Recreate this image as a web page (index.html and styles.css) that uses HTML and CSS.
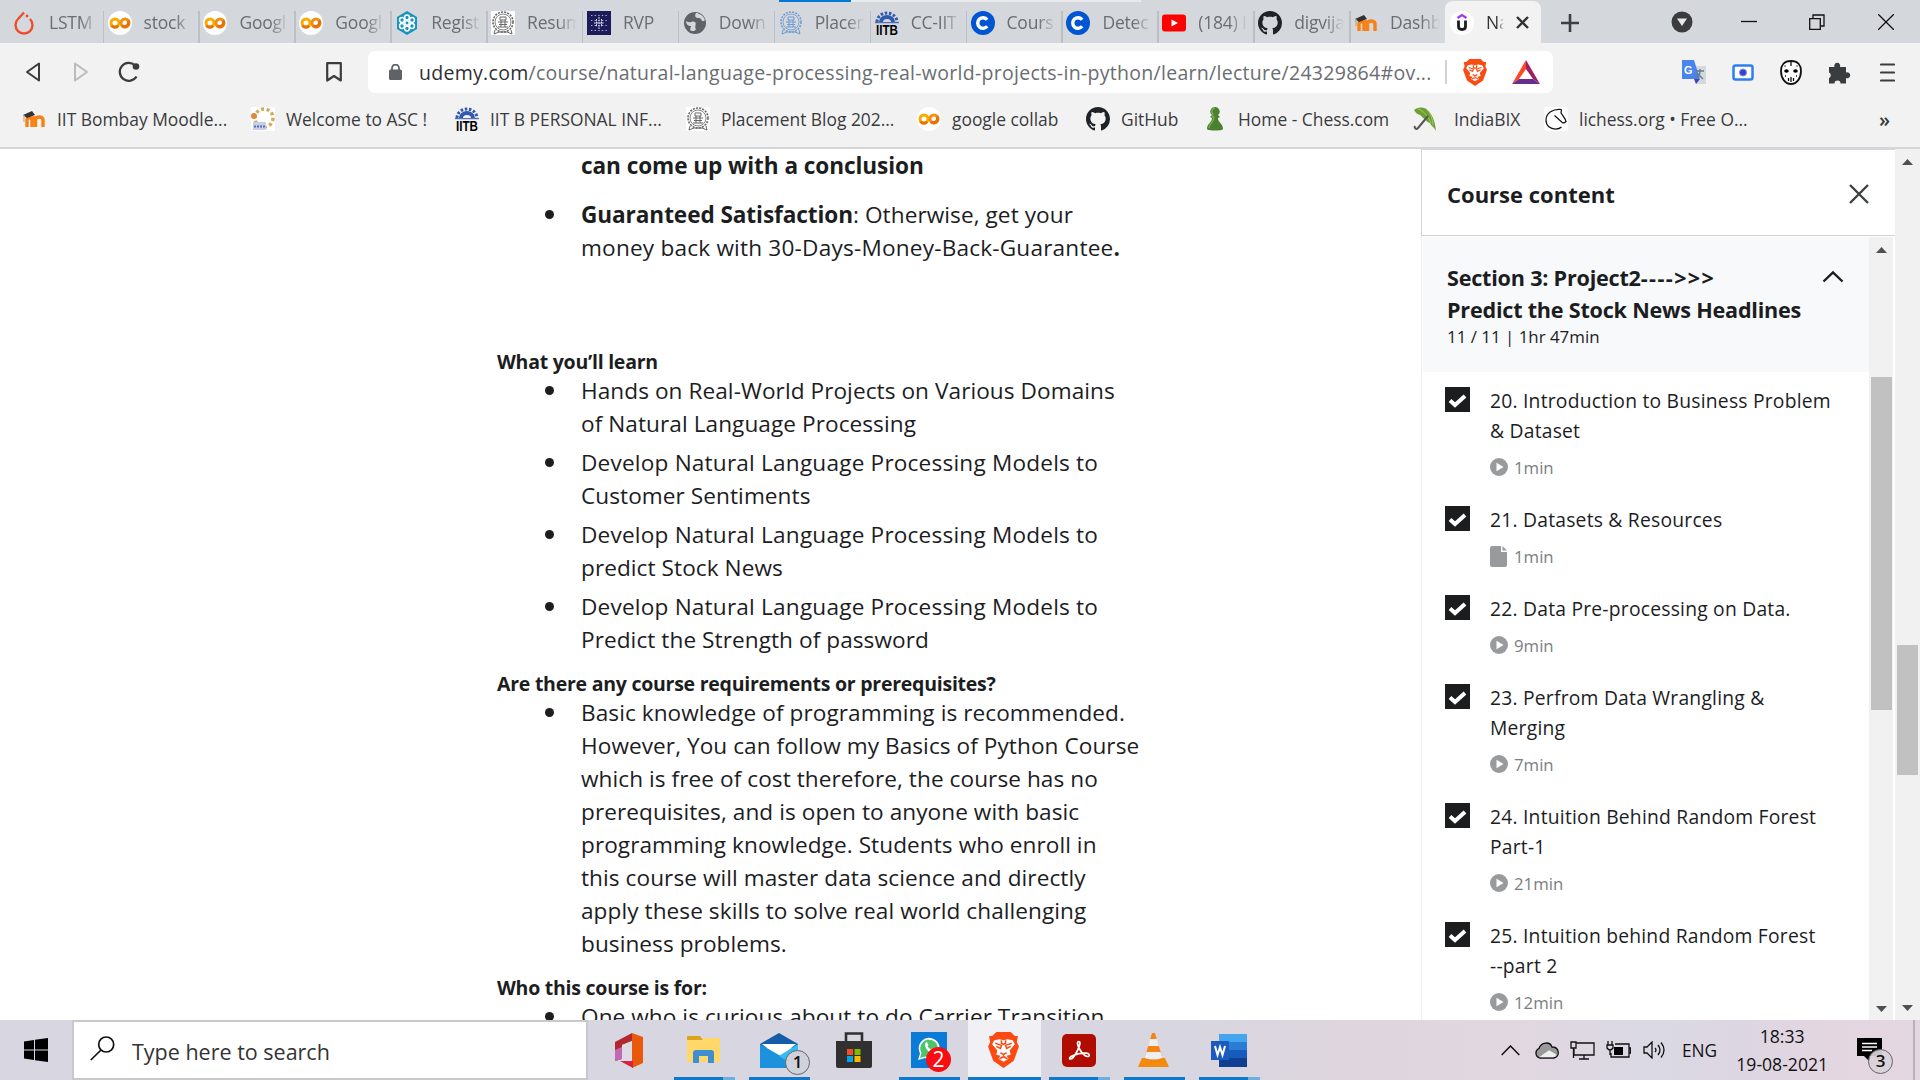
FILE: index.html
```html
<!DOCTYPE html>
<html lang="en">
<head>
<meta charset="utf-8">
<title>Natural Language Processing</title>
<link rel="stylesheet" href="styles.css">
</head>
<body>
<svg class="defs" width="0" height="0">
  <symbol id="colab" viewBox="0 0 24 24"><circle cx="12" cy="12" r="12" fill="#fff"/><circle cx="7" cy="12" r="4" fill="none" stroke="#f9ab00" stroke-width="3"/><circle cx="17" cy="12" r="4" fill="none" stroke="#f29111" stroke-width="3"/><path d="M3.500 14.500A4 4 0 0 0 10 14.600M20 9.500A4 4 0 0 1 14 14.600" fill="none" stroke="#e8710a" stroke-width="3"/></symbol>
  <symbol id="flame" viewBox="0 0 24 24"><path d="M12 1.500 6 8a8.500 8.500 0 1 0 12 0" fill="none" stroke="#ee4c2c" stroke-width="2.400"/><circle cx="15" cy="5" r="1.400" fill="#ee4c2c"/></symbol>
  <symbol id="flower" viewBox="0 0 24 24"><path d="M12 0 22 6V18L12 24 2 18V6Z" fill="#1693bf"/><g fill="none" stroke="#fff" stroke-width="1.500"><circle cx="12" cy="12" r="2.200"/><circle cx="12" cy="6.500" r="2.400"/><circle cx="12" cy="17.500" r="2.400"/><circle cx="7" cy="9" r="2.400"/><circle cx="17" cy="9" r="2.400"/><circle cx="7" cy="15" r="2.400"/><circle cx="17" cy="15" r="2.400"/></g></symbol>
  <symbol id="seal" viewBox="0 0 24 24"><circle cx="12" cy="11" r="10" fill="none" stroke="currentColor" stroke-width="1.600" stroke-dasharray="2 1.200"/><circle cx="12" cy="11" r="8" fill="none" stroke="currentColor" stroke-width=".8"/><path d="M9 6h6v3H9zM7 11h10M8 13.500h8M10 9v7M14 9v7M7 16h10M4 19l-1 4 5-2h8l5 2-1-4" fill="none" stroke="currentColor" stroke-width="1"/></symbol>
  <symbol id="rvp" viewBox="0 0 24 24"><path fill="#1e1c58" d="M0 0h24v24H0z"/><path d="M4 4.500h16M4 9.500h16M4 14.500h16M4 19.500h16" stroke="#a9a9dc" stroke-width="1.200" stroke-dasharray="1.400 2.200"/><path d="M9.500 8v8M12 6v12M14.500 8v8M7 12h10" stroke="#e6e6fa" stroke-width="1" stroke-dasharray="1.800 .8"/></symbol>
  <symbol id="globe" viewBox="0 0 24 24"><circle cx="12" cy="12" r="11" fill="#5f6368"/><path d="M3 10c4 3 6-1 9 1 2 2-1 5 1 7-1 3-5 2-6 1l1-4c-3 0-5-2-5-5ZM13 2c-2 4 0 5 3 5s2 4 5 3l1-1C20 4 16 2 13 2Z" fill="#d4d8dc"/></symbol>
  <symbol id="iitb" viewBox="0 0 24 24"><path d="M2 11a10 9 0 0 1 20 0" fill="none" stroke="#3159ad" stroke-width="3" stroke-dasharray="2.500 1.700"/><path d="M4 11a8 7 0 0 1 16 0h-4a4 3 0 0 0-8 0Z" fill="#3159ad"/><path d="M0 11.700h24" stroke="#3159ad"/><text x="1" y="24" textLength="22" lengthAdjust="spacingAndGlyphs" class="iitb-text">IITB</text></symbol>
  <symbol id="coursera" viewBox="0 0 24 24"><circle cx="12" cy="12" r="12" fill="#0056d2"/><path d="M16.200 8.700a5.300 5.300 0 1 0 0 6.600" fill="none" stroke="#fff" stroke-width="3.400"/></symbol>
  <symbol id="youtube" viewBox="0 0 24 24"><rect y="3.500" width="24" height="17" rx="3" fill="#f00"/><path d="m9.500 8.500 6.500 3.500-6.500 3.500Z" fill="#fff"/></symbol>
  <symbol id="github" viewBox="0 0 16 16"><path fill="#1f2328" d="M8 0C3.580 0 0 3.580 0 8c0 3.540 2.290 6.530 5.470 7.590.4.070.55-.17.55-.38 0-.19-.01-.82-.01-1.490-2.010.37-2.530-.49-2.690-.94-.09-.23-.48-.94-.82-1.130-.28-.15-.68-.52-.01-.53.63-.01 1.080.58 1.230.82.72 1.210 1.870.87 2.330.66.070-.52.280-.87.510-1.070-1.780-.2-3.640-.89-3.640-3.950 0-.87.310-1.590.820-2.150-.08-.2-.36-1.020.080-2.120 0 0 .67-.21 2.200.82.64-.18 1.320-.27 2-.27s1.360.09 2 .27c1.530-1.040 2.200-.82 2.200-.82.44 1.100.16 1.920.080 2.120.51.56.82 1.270.82 2.150 0 3.070-1.870 3.750-3.650 3.950.29.25.54.73.54 1.480 0 1.070-.01 1.930-.01 2.200 0 .21.150.46.550.38A8.010 8.010 0 0 0 16 8c0-4.420-3.580-8-8-8Z"/></symbol>
  <symbol id="moodle" viewBox="0 0 24 24"><path d="M5 20v-7c0-3 5-3 5 0v7m3.500 0v-7c0-4 7.500-4 7.500 0v7M10 13c0-3 3.500-3 3.500 0v7" fill="none" stroke="#f98012" stroke-width="3.400"/><path d="m1 8 9-4 3 4-8 3Z" fill="#333"/><path d="M2 8v7" stroke="#c79a62"/></symbol>
  <symbol id="udemy" viewBox="0 0 24 24"><circle cx="12" cy="12" r="12" fill="#fff"/><path d="m7.500 7 4.500-3 4.500 3" fill="none" stroke="#a435f0" stroke-width="2.200"/><path d="M8.500 9.500v6c0 4 7 4 7 0v-6" fill="none" stroke="#1c1d1f" stroke-width="2.800"/></symbol>
  <symbol id="asc" viewBox="0 0 24 24"><path fill="#fff" d="M0 0h24v24H0z"/><circle cx="13" cy="11" r="9" fill="none" stroke="#d1a95c" stroke-width="3.400" stroke-dasharray="3 2.600"/><circle cx="3" cy="9" r="3" fill="#d78a3c"/><path d="M2 15h13v8H2z" fill="#c8cfe6"/><path d="M3 19.500h11" stroke="#5571b3" stroke-width="2" stroke-dasharray="2 1"/></symbol>
  <symbol id="pawn" viewBox="0 0 24 24"><path d="M12 0a4.500 4.500 0 0 1 3 8l2 2-2 1c0 5 5 5 5 11 0 2-16 2-16 0 0-6 5-6 5-11l-2-1 2-2a4.500 4.500 0 0 1 3-8Z" fill="#4c8134"/><path d="M12 1a3.500 3.500 0 0 0-2 6l-1 3h2c0 6-5 6-5 11" fill="none" stroke="#77a94d" stroke-width="1.400"/></symbol>
  <symbol id="umbrella" viewBox="0 0 24 24"><path d="M1 3C8-3 21 1 23 24c-3-5-5-5-6-8-4-1-4-4-7-5C7 6 4 9 1 3Z" fill="#6da033"/><path d="M5 2c6 2 10 7 13 14M12 1c5 4 7 8 8 17" fill="none" stroke="#a3c969"/><path d="M15 9 5 21c-2 2-4 0-3-2" fill="none" stroke="#555" stroke-width="2"/></symbol>
  <symbol id="lichess" viewBox="0 0 24 24"><rect width="24" height="24" rx="3" fill="#fff"/><path d="M17.500 2.500C9 1.500 2 6 2 13c0 6 4.500 9 9.500 9 2.500 0 4.500-.5 6-2M17.500 2.500 17 6c2 3 4.500 5.500 5 8.500-1 1.200-2.200 1.700-3.500 1.300L10.500 8.500" fill="none" stroke="#111" stroke-width="1.250"/></symbol>
  <symbol id="brave" viewBox="0 0 30 35"><path d="M8 0h14l4 4 3 0-1 6 2 4-5 14-10 7-10-7L0 14l2-4L1 4h3Z" fill="#fb4a12"/><path d="m6 8 5-1 4 1 4-1 5 1 2 4-5 6 1 4-4 1 2 3-5 3-5-3 2-3-4-1 1-4-5-6Z" fill="#fff"/><path d="m7 11 6 2-1 3-4-2M23 11l-6 2 1 3 4-2M13 8v3l2 1 2-1V8M12 20l3 2 3-2M15 22v3M11 26l4-2 4 2" fill="none" stroke="#fb4a12" stroke-width="1.500"/></symbol>
  <symbol id="check" viewBox="0 0 25 25"><path fill="#1c1d1f" d="M0 0h25v25H0z"/><path d="m5 13.500 5 4.500L20 9" fill="none" stroke="#fff" stroke-width="4"/></symbol>
  <symbol id="play" viewBox="0 0 18 18"><circle cx="9" cy="9" r="9" fill="#989a9c"/><path d="m6.500 4.800 7 4.200-7 4.200Z" fill="#fff"/></symbol>
  <symbol id="file" viewBox="0 0 18 21"><path d="M2 0h9v6h6v13a2 2 0 0 1-2 2H2a2 2 0 0 1-2-2V2a2 2 0 0 1 2-2Z" fill="#989a9c"/><path d="m12.500 0 4.500 4.500h-4.500Z" fill="#989a9c"/></symbol>
  <symbol id="up" viewBox="0 0 11 6"><path d="M0 6 5.500 0 11 6Z" fill="#505050"/></symbol>
  <symbol id="down" viewBox="0 0 11 6"><path d="M0 0h11L5.500 6Z" fill="#505050"/></symbol>
</svg>

<header class="browser">
  <div class="tabstrip">
    <div class="tab first"><svg><use href="#flame"/></svg><span>LSTM</span></div>
    <div class="tab"><svg><use href="#colab"/></svg><span>stock</span></div>
    <div class="tab"><svg><use href="#colab"/></svg><span>Googl</span></div>
    <div class="tab"><svg><use href="#colab"/></svg><span>Googl</span></div>
    <div class="tab"><svg><use href="#flower"/></svg><span>Regist</span></div>
    <div class="tab"><svg class="seal"><use href="#seal"/></svg><span>Resum</span></div>
    <div class="tab"><svg><use href="#rvp"/></svg><span>RVP</span></div>
    <div class="tab"><svg><use href="#globe"/></svg><span>Down</span></div>
    <div class="tab"><svg class="seal-blue"><use href="#seal"/></svg><span>Placem</span></div>
    <div class="tab"><svg><use href="#iitb"/></svg><span>CC-IIT</span></div>
    <div class="tab"><svg><use href="#coursera"/></svg><span>Cours</span></div>
    <div class="tab"><svg><use href="#coursera"/></svg><span>Detec</span></div>
    <div class="tab"><svg><use href="#youtube"/></svg><span>(184) I</span></div>
    <div class="tab"><svg><use href="#github"/></svg><span>digvija</span></div>
    <div class="tab"><svg><use href="#moodle"/></svg><span>Dashb</span></div>
    <div class="tab active"><svg><use href="#udemy"/></svg><span>Na</span><svg class="tab-close" viewBox="0 0 13 13"><path d="m1 1 11 11M12 1 1 12" stroke="#333" stroke-width="2.400"/></svg></div>
    <svg class="plus" viewBox="0 0 18 18"><path d="M9 0v18M0 9h18" stroke="#3c4043" stroke-width="2.600"/></svg>
    <div class="window-buttons">
      <svg width="22" height="22" viewBox="0 0 22 22"><circle cx="11" cy="11" r="10.500" fill="#3b3c3e"/><path d="M6 7.500h10L11 15Z" fill="#e8eaec"/></svg>
      <svg width="16" height="16" viewBox="0 0 16 16"><path d="M0 7.500h16" stroke="#111" stroke-width="1.300"/></svg>
      <svg width="16" height="16" viewBox="0 0 16 16"><path d="M.7 4.700h10.600v10.600H.7zM4 4V1h11v11h-3" fill="none" stroke="#111" stroke-width="1.300"/></svg>
      <svg width="16" height="16" viewBox="0 0 16 16"><path d="m0 0 16 16M16 0 0 16" stroke="#111" stroke-width="1.300"/></svg>
    </div>
  </div>
  <div class="progress"><i></i></div>

  <div class="toolbar">
    <div class="nav">
      <svg width="16" height="20" viewBox="0 0 16 20"><path d="M14 1.500v17L2 10Z" fill="none" stroke="#3b3c3e" stroke-width="2" stroke-linejoin="round"/></svg>
      <svg width="16" height="20" viewBox="0 0 16 20"><path d="M2 1.500v17L14 10Z" fill="none" stroke="#bbb" stroke-width="2" stroke-linejoin="round"/></svg>
      <svg width="22" height="22" viewBox="0 0 22 22"><path d="M18.500 15.500A9 9 0 1 1 17 4.300" fill="none" stroke="#3b3c3e" stroke-width="2.300"/><circle cx="18" cy="5.500" r="3.300" fill="#3b3c3e"/></svg>
      <svg class="bookmark" width="16" height="20" viewBox="0 0 16 20"><path d="M1.200 1.200h13.600v17.300L8 14l-6.800 4.500Z" fill="none" stroke="#3b3c3e" stroke-width="2.200" stroke-linejoin="round"/></svg>
    </div>
    <div class="address">
      <svg width="13" height="16" viewBox="0 0 13 16"><rect y="5.500" width="13" height="10.500" rx="1.500" fill="#5f6368"/><path d="M3 6V4a3.500 3.500 0 0 1 7 0v2" fill="none" stroke="#5f6368" stroke-width="1.800"/></svg>
      <span class="url"><b>udemy.com</b>/course/natural-language-processing-real-world-projects-in-python/learn/lecture/24329864#ov...</span>
      <i></i>
      <svg width="24" height="27" viewBox="0 0 30 35" preserveAspectRatio="none"><use href="#brave" width="30" height="35"/></svg>
      <svg width="28" height="24" viewBox="0 0 28 24"><path d="M14 0v9L7 19 0 24Z" fill="#ff4724"/><path d="M14 0v9l7 10 7 5Z" fill="#9e1f63"/><path d="m0 24 7-5h14l7 5Z" fill="#662d91"/></svg>
    </div>
    <div class="extensions">
      <svg width="24" height="24" viewBox="0 0 24 24"><path d="M10 6h14v18H14Z" fill="#d5d8dc"/><path d="M0 0h12l6 19H0Z" fill="#4a84ec"/><path d="M12 19h6l-4 5Z" fill="#3948b3"/><text x="2" y="14" class="gt">G</text><path d="M14 11h8m-4-2v2c0 3-2 6-5 7m2-5 6 6" fill="none" stroke="#607d8b" stroke-width="1.400"/></svg>
      <svg width="22" height="17" viewBox="0 0 22 17"><rect x="1.500" y="1.500" width="19" height="14" rx="2" fill="#fff" stroke="#2d7ff0" stroke-width="2.500"/><circle cx="11" cy="8.500" r="3.500" fill="#3f40c8" stroke="#6f8df0"/></svg>
      <svg width="22" height="25" viewBox="0 0 22 25"><path d="M11 1c7 0 10 4 10 10 0 7-4 13-10 13S1 18 1 11C1 5 4 1 11 1Z" fill="#fff" stroke="#111" stroke-width="1.800"/><ellipse cx="6.500" cy="11" rx="2.300" ry="1.700" /><ellipse cx="15.500" cy="11" rx="2.300" ry="1.700"/><path d="M11 2v4M4.500 6h1m12 0h-1M5 16h1m10 0h1M8.500 18v3M11 17v5M13.500 18v3" stroke="#111" stroke-width="1.300"/></svg>
      <svg width="23" height="23" viewBox="0 0 23 23"><path d="M1 6h5.500a3 3 0 1 1 5.500 0H18v5.500a3 3 0 1 1 0 5.500v5.500h-5.500a3 3 0 0 0-6 0H1V17a3 3 0 0 0 0-5.500Z" fill="#3b3c3e"/></svg>
      <svg width="15" height="19" viewBox="0 0 15 19"><path d="M1 1.500h13M1 9.500h13M1 17.500h13" stroke="#3b3c3e" stroke-width="2.200" stroke-linecap="round"/></svg>
    </div>
  </div>

  <div class="bookmarks">
    <div><svg><use href="#moodle"/></svg><span>IIT Bombay Moodle...</span></div>
    <div><svg><use href="#asc"/></svg><span>Welcome to ASC !</span></div>
    <div><svg><use href="#iitb"/></svg><span>IIT B PERSONAL INF...</span></div>
    <div><svg class="seal"><use href="#seal"/></svg><span>Placement Blog 202...</span></div>
    <div><svg><use href="#colab"/></svg><span>google collab</span></div>
    <div><svg><use href="#github"/></svg><span>GitHub</span></div>
    <div><svg><use href="#pawn"/></svg><span>Home - Chess.com</span></div>
    <div><svg><use href="#umbrella"/></svg><span>IndiaBIX</span></div>
    <div><svg><use href="#lichess"/></svg><span>lichess.org • Free O...</span></div>
    <div><b>»</b></div>
  </div>
</header>

<div class="page">
  <main class="description">
    <ul>
      <li class="continued"><strong>can come up with a conclusion</strong></li>
      <li><strong>Guaranteed Satisfaction</strong>: Otherwise, get your<br><span class="wide">money back with 30-Days-Money-Back-Guarantee<strong>.</strong></span></li>
    </ul>
    <h2 class="spaced">What you’ll learn</h2>
    <ul>
      <li>Hands on Real-World Projects on Various Domains<br>of Natural Language Processing</li>
      <li><span class="wide">Develop Natural Language Processing Models to</span><br>Customer Sentiments</li>
      <li><span class="wide">Develop Natural Language Processing Models to</span><br>predict Stock News</li>
      <li><span class="wide">Develop Natural Language Processing Models to</span><br>Predict the Strength of password</li>
    </ul>
    <h2>Are there any course requirements or prerequisites?</h2>
    <ul>
      <li>Basic knowledge of programming is recommended.<br>However, You can follow my Basics of Python Course<br>which is free of cost therefore, the course has no<br>prerequisites, and is open to anyone with basic<br>programming knowledge. Students who enroll in<br>this course will master data science and directly<br>apply these skills to solve real world challenging<br>business problems.</li>
    </ul>
    <h2>Who this course is for:</h2>
    <ul>
      <li>One who is curious about to do Carrier Transition</li>
    </ul>
  </main>

  <aside class="sidebar">
    <div class="sidebar-head">
      <h3>Course content</h3>
      <svg width="20" height="20" viewBox="0 0 20 20"><path d="m1 1 18 18M19 1 1 19" stroke="#3e4143" stroke-width="2.400"/></svg>
    </div>
    <div class="sidebar-body">
      <div class="curriculum">
        <div class="section">
          <div>
            <h3>Section 3: Project2<span class="arrows">----&gt;&gt;&gt;</span><br>Predict the Stock News Headlines</h3>
            <p>11 / 11 | 1hr 47min</p>
          </div>
          <svg width="22" height="13" viewBox="0 0 22 13"><path d="m1.500 11.500 9.500-9 9.500 9" fill="none" stroke="#1c1d1f" stroke-width="2.400"/></svg>
        </div>
        <div class="lecture"><svg class="box"><use href="#check"/></svg><div><p>20. Introduction to Business Problem<br>&amp; Dataset</p><small><svg><use href="#play"/></svg>1min</small></div></div>
        <div class="lecture"><svg class="box"><use href="#check"/></svg><div><p>21. Datasets &amp; Resources</p><small><svg class="file"><use href="#file"/></svg>1min</small></div></div>
        <div class="lecture"><svg class="box"><use href="#check"/></svg><div><p>22. Data Pre-processing on Data.</p><small><svg><use href="#play"/></svg>9min</small></div></div>
        <div class="lecture"><svg class="box"><use href="#check"/></svg><div><p>23. Perfrom Data Wrangling &amp;<br>Merging</p><small><svg><use href="#play"/></svg>7min</small></div></div>
        <div class="lecture"><svg class="box"><use href="#check"/></svg><div><p>24. Intuition Behind Random Forest<br>Part-1</p><small><svg><use href="#play"/></svg>21min</small></div></div>
        <div class="lecture"><svg class="box"><use href="#check"/></svg><div><p>25. Intuition behind Random Forest<br>--part 2</p><small><svg><use href="#play"/></svg>12min</small></div></div>
      </div>
      <div class="scroll inner"><svg><use href="#up"/></svg><i></i><svg><use href="#down"/></svg></div>
    </div>
  </aside>
  <div class="scroll outer"><svg><use href="#up"/></svg><i></i><svg><use href="#down"/></svg></div>
</div>

<footer class="taskbar">
  <div class="start"><svg width="24" height="24" viewBox="0 0 24 24"><path d="M0 3.500 10 2v9.500H0zM11 1.800 24 0v11.500H11zM0 12.500h10V22L0 20.500zM11 12.500h13V24l-13-1.800z"/></svg></div>
  <div class="search"><svg width="25" height="25" viewBox="0 0 25 25"><circle cx="16.200" cy="8.500" r="7.500" fill="none" stroke="#111" stroke-width="1.700"/><path d="M11 14 .8 24" stroke="#111" stroke-width="1.700"/></svg><span>Type here to search</span></div>
  <div class="apps">
    <div class="app"><svg width="28" height="35" viewBox="0 0 28 35"><path d="M17 0 28 4v26l-11 5V7Z" fill="#e8590c"/><path d="M17 0v8L7 12v14L0 28V9Z" fill="#b3272d"/><path d="M0 17 7 14v12L0 28Z" fill="#c16ab4"/><path d="M5 28h13v7Z" fill="#dc2043"/><path d="M7 12 17 8v20H7l-2 0 2-2Z" fill="#dddbe4"/></svg></div>
    <div class="app open multi"><svg width="34" height="28" viewBox="0 0 34 28"><path d="M0 1q0-1 1-1h12l3 4H0Z" fill="#dca31b"/><path d="M0 4h15l2-2h16v24H0Z" fill="#ffd869"/><path d="M6 27V17q0-3 3-3h15q3 0 3 3v10h-6v-7h-9v7Z" fill="#3d8fd1"/></svg></div>
    <div class="app open"><svg width="38" height="35" viewBox="0 0 38 35"><path d="M0 11 19 0l19 11v4H0Z" fill="#145da9"/><path d="M2 11h34L19 25Z" fill="#fff"/><path d="M0 11 38 33v2H0Z" fill="#1c91dd"/><path d="M38 11 19 23l19 12Z" fill="#35bdf2"/></svg><b class="badge">1</b></div>
    <div class="app"><svg width="36" height="36" viewBox="0 0 36 36"><path d="M10 10V1.500h16V10" fill="none" stroke="#303030" stroke-width="2.600"/><path d="M0 9h36v25q0 2-2 2H2q-2 0-2-2Z" fill="#303030"/><path d="M11 17h6v6h-6z" fill="#f25022"/><path d="M18.500 17h6v6h-6z" fill="#7fba00"/><path d="M11 24h6v6h-6z" fill="#00a4ef"/><path d="M18.500 24h6v6h-6z" fill="#ffb900"/></svg></div>
    <div class="app open"><svg width="36" height="36" viewBox="0 0 36 36"><path fill="#0a7bd6" d="M0 0h36v36H0z"/><path d="m7 28 2-6.500A10.500 10.500 0 1 1 14 26Z" fill="#fff"/><path d="m9 26 1.500-5a8.800 8.800 0 1 1 4 3.500Z" fill="#4fc36a"/><path d="M14 12c0 5 4 9 9 9l1.500-2.500-3.500-2-1.500 1-3-3 1-1.500-2-3.500Z" fill="#fff"/></svg><b class="badge red">2</b></div>
    <div class="app open active"><svg width="31" height="36"><use href="#brave"/></svg></div>
    <div class="app open multi"><svg width="34" height="33" viewBox="0 0 34 33"><rect width="34" height="33" rx="5" fill="#b10c00"/><path d="M17 7.500c-2.500 0-1.500 4 .5 7.500s5 7 8 7.500c2.500 0 2.500-3-1.500-3.300-4-.3-9 .8-13 2.300-4 1.500-4 3.500-2.500 3.500 2 0 5-4.500 7-8.500S19 7.500 17 7.500Z" fill="none" stroke="#fff" stroke-width="1.700"/></svg></div>
    <div class="app open"><svg width="31" height="34" viewBox="0 0 31 34"><path d="M4 25h23l4 9H0Z" fill="#f58b0a"/><path d="M14 0h3l8 27q-9 5-19 0Z" fill="#f48417"/><path d="m12 6-2 7h11l-2-7ZM8.500 19l-2 6q9 3 18 0l-2-6Z" fill="#eee"/></svg></div>
    <div class="app open multi"><svg width="36" height="33" viewBox="0 0 36 33"><path d="M8 0h28v9H8z" fill="#42a5ee"/><path d="M8 8h28v8H8z" fill="#2b7cd3"/><path d="M8 16h28v8H8z" fill="#185abd"/><path d="M8 24h28v9H8z" fill="#103f91"/><path d="M0 7h18v19H0z" fill="#1b5bbd"/><path d="m4 12 2.500 9L9 13l2.500 8 2.500-9" fill="none" stroke="#fff" stroke-width="2"/></svg></div>
  </div>
  <div class="tray">
    <svg width="19" height="11" viewBox="0 0 19 11"><path d="m.7 10 8.800-9 8.800 9" fill="none" stroke="#111" stroke-width="1.500"/></svg>
    <svg width="25" height="17" viewBox="0 0 25 17"><path d="M6 16a5 5 0 0 1-1-9.500C7 0 16-1 18 5c8 0 8 10 2 11Z" fill="#999" stroke="#111" stroke-width="1.300"/><path d="m5 15.300 10-7 7 4c0 2-1 3-3 3Z" fill="#eee"/></svg>
    <svg width="25" height="19" viewBox="0 0 25 19"><path d="M6 2h18v12H4V8M14 14v4M9 18h10M1 1h5v6H1zM3.500 7v10" fill="none" stroke="#111" stroke-width="1.300"/></svg>
    <svg width="25" height="18" viewBox="0 0 25 18"><path d="M9 3h14v13H5v-4M23 7h1.500v5H23M2 0v4m4-4v4M1 4h6v3q-3 4-6 0ZM4 9v5" fill="none" stroke="#111" stroke-width="1.300"/><path d="M8 6h9v8H8z"/></svg>
    <svg width="23" height="18" viewBox="0 0 23 18"><path d="M1 6h3l5-5v16l-5-5H1ZM12 7q2 2 0 4M15 4q4 5 0 10M18 1.500q6 7.500 0 15" fill="none" stroke="#111" stroke-width="1.300"/></svg>
    <span class="lang">ENG</span>
    <div class="clock"><span>18:33</span><span>19-08-2021</span></div>
    <div class="notify"><svg width="25" height="24" viewBox="0 0 25 24"><path d="M0 0h25v18H13v6l-6-6H0Z"/><path d="M5 5.500h15M5 9h15M5 12.500h10" stroke="#fff" stroke-width="1.300"/></svg><b class="badge light">3</b></div>
  </div>
</footer>
</body>
</html>
```

FILE: styles.css
```css
* { box-sizing: border-box; }
body {
  margin: 0;
  width: 1920px;
  height: 1080px;
  overflow: hidden;
  display: flex;
  flex-direction: column;
  background: #fff;
  color: #1c1d1f;
  font-family: "Open Sans", "Noto Sans", sans-serif;
}
h2, h3, p, ul { margin: 0; padding: 0; }
svg { display: block; flex: none; }
.defs { position: absolute; }
.iitb-text { font: bold 14px "Liberation Sans", sans-serif; fill: #000; }
.gt { font: bold 11px "Liberation Sans", sans-serif; fill: #fff; }
.seal { color: #666; background: #fff; }
.seal-blue { color: #6d9bd1; }

/* browser chrome */
.browser { position: relative; height: 149px; background: #f2f2f2; border-bottom: 2px solid #d4d6d8; flex: none; }
.tabstrip { display: flex; height: 43px; background: #d4d8dc; }
.tab { display: flex; width: 95.900px; height: 43px; padding: 2px 0 0 5px; align-items: center; position: relative; }
.tab svg { width: 24px; height: 24px; }
.tab span { width: 50px; margin-left: 12px; padding-bottom: 1px; overflow: hidden; white-space: nowrap; font-size: 17.500px; color: #6a6d71; letter-spacing: -.2px; -webkit-mask-image: linear-gradient(90deg, #000 62%, transparent); mask-image: linear-gradient(90deg, #000 62%, transparent); }
.tab::before { content: ""; position: absolute; left: 0; top: 11px; height: 32px; width: 1.500px; background: #bcbfc3; }
.tab.first { width: 102.500px; padding-left: 12px; }
.tab.first span { margin-left: 13px; }
.tab.first::before, .tab.active::before { display: none; }
.tab.active { background: #f2f2f2; margin-top: 1px; height: 42px; border-radius: 8px 8px 0 0; padding-top: 1px; }
.tab.active span { width: 18px; color: #333; }
.tab.active .tab-close { width: 13px; height: 13px; margin-left: 12px; }
.plus { width: 18px; height: 18px; margin: 14px 0 0 20px; }
.window-buttons { display: flex; align-items: center; height: 43px; padding-top: 1px; margin-left: 92px; }
.window-buttons svg + svg { margin-left: 48px; }
.window-buttons svg + svg + svg { margin-left: 52px; }
.window-buttons svg + svg + svg + svg { margin-left: 53px; }
.progress { position: absolute; left: 779px; top: 0; width: 362px; height: 2px; background: #e8eaec; }
.progress i { display: block; width: 72px; height: 2px; background: #0078d7; }

.toolbar { display: flex; height: 42px; margin-top: 8px; }
.nav { display: flex; width: 368px; padding-left: 25px; align-items: center; }
.nav svg + svg { margin-left: 32px; }
.nav svg + svg + svg { margin-left: 29px; }
.nav svg + svg + svg.bookmark { margin-left: 186px; }
.address { display: flex; align-items: center; width: 1185px; height: 42px; padding-left: 21px; border-radius: 7px; background: #fff; }
.url { width: 1026px; margin-left: 17px; white-space: nowrap; font-size: 19.500px; letter-spacing: .29px; color: #6a6d71; }
.url b { font-weight: 400; color: #2f3032; }
.address i { width: 2px; height: 24px; margin-right: 16px; background: #d0d2d4; }
.address svg + svg { margin-left: 25px; }
.extensions { display: flex; align-items: center; padding-left: 129px; }
.extensions svg + svg { margin-left: 26px; }
.extensions svg:last-child { margin-left: 29px; }

.bookmarks { display: grid; grid-template-columns: 229px 204px 231px 231px 169px 117px 210px 130px 336px auto; height: 52px; padding-left: 22px; font-size: 17.400px; color: #3a3b3d; }
.bookmarks div { display: flex; align-items: center; gap: 11px; white-space: nowrap; }
.bookmarks svg { width: 24px; height: 24px; }
.bookmarks div:nth-child(8) span { margin-left: 6px; }
.bookmarks div:nth-child(9) svg { margin-left: 1px; }
.bookmarks b { font-size: 20px; font-weight: 600; }

/* page */
.page { display: flex; height: 871px; flex: none; }
.description { width: 1421px; height: 871px; padding-left: 497px; overflow: hidden; }
.description ul { list-style: none; padding-left: 84px; }
.description li { position: relative; font-size: 22.600px; letter-spacing: .07px; line-height: 33px; white-space: nowrap; margin-bottom: 6px; }
.description li strong { letter-spacing: -.08px; }
.description li .wide { letter-spacing: .2px; }
.description li::before { content: ""; position: absolute; left: -36px; top: 12px; width: 9px; height: 9px; border-radius: 50%; background: #1c1d1f; }
.description li.continued { margin-bottom: 16px; }
.description li.continued::before { display: none; }
.description li:last-child { margin-bottom: 0; }
.description h2 { font-size: 19.500px; letter-spacing: -.25px; line-height: 22px; padding-top: 17px; margin-bottom: 1px; }
.description h2.spaced { padding-top: 86.500px; }

.sidebar { width: 474px; display: flex; flex-direction: column; border-left: 1px solid #eceef0; }
.sidebar-head { display: flex; justify-content: space-between; align-items: center; height: 87px; padding: 2px 26px 0 25px; border-top: 1px solid #d1d7dc; border-bottom: 1px solid #d1d2d4; box-shadow: -1px 0 #d1d2d4; }
.sidebar h3 { font-size: 22px; line-height: 32px; white-space: nowrap; }
.sidebar-body { display: flex; height: 784px; padding-top: 1px; overflow: hidden; }
.curriculum { width: 447px; }
.section { display: flex; justify-content: space-between; height: 135px; margin-left: 1px; padding: 25px 25px 0 24px; background: #f7f9fa; }
.section svg { margin-top: 8px; }
.sidebar .section h3 { font-size: 21.600px; letter-spacing: -.22px; }
.section p { font-size: 16.900px; line-height: 22px; white-space: nowrap; }
.sidebar .section .arrows { letter-spacing: 1.400px; }
.lecture { display: flex; padding: 14px 0 11px 23px; }
.box { width: 25px; height: 25px; margin: 1px 20px 0 0; }
.lecture p { font-size: 19.300px; letter-spacing: .22px; line-height: 30px; white-space: nowrap; }
.lecture small { display: flex; align-items: center; gap: 6px; height: 26px; margin-top: 8px; font-size: 16.800px; color: #7b7e81; }
.lecture small svg { width: 18px; height: 18px; }
.lecture small .file { height: 21px; }

.scroll { display: flex; flex-direction: column; align-items: center; background: #f1f1f1; }
.scroll svg { width: 11px; height: 6px; }
.scroll i { width: 21px; background: #c1c1c1; }
.scroll.inner { width: 24px; padding-top: 10px; }
.scroll.inner i { height: 333px; margin: 124px 0 296px; }
.scroll.outer { width: 25px; padding-top: 10px; }
.scroll.outer i { height: 130px; margin: 480px 0 230px; }

/* taskbar */
.taskbar { display: flex; height: 60px; flex: none; background: linear-gradient(90deg, #d8d7e1 0, #d8d6e0 62%, #dfd5de 71%, #e1d7e0 79%, #dad9e4 86%, #ddd6e2 91%, #e4d6e0 96%, #e3d7e2); }
.start { width: 72px; padding: 18px 0 0 24px; }
.search { display: flex; align-items: center; width: 516px; padding-left: 16px; gap: 17px; border: 2px solid #c9c9cb; background: #fff; font-size: 21.500px; color: #333; white-space: nowrap; }
.search svg { margin-top: -3px; }
.search span { padding-top: 2px; }
.apps { display: flex; margin-left: 3px; }
.app { position: relative; display: flex; align-items: center; justify-content: center; width: 75px; height: 60px; }
.app.open::after { content: ""; position: absolute; left: 8px; right: 6px; bottom: 0; height: 3px; background: #0f78c9; }
.app.multi::after { background: linear-gradient(90deg, #0f78c9 80%, #6daee0 80%); }
.app.active { background: linear-gradient(90deg, transparent 2px, #f1f0f5 2px); }
.app.active::after { left: 2px; right: 0; }
.badge { position: absolute; left: 44px; top: 30px; width: 25px; height: 25px; border: 1px solid #666; border-radius: 50%; background: #cfd2da; font-size: 17px; line-height: 22px; font-weight: 600; text-align: center; color: #111; }
.badge.red { left: 35px; top: 27px; border: 0; background: #f80d12; color: #fff; font-size: 21px; line-height: 24px; font-weight: 400; margin-left: 0; }
.tray { display: flex; align-items: center; width: 414px; margin-left: 235px; border-right: 2px solid #b9b0b9; font-size: 17px; color: #111; }
.tray svg + svg { margin-left: 11px; }
.tray > svg:nth-child(2) { margin-left: 14px; }
.tray > svg:nth-child(5) { margin-left: 12px; }
.lang { margin-left: 16px; font-size: 17.300px; }
.clock { display: flex; flex-direction: column; align-items: center; width: 92px; margin-left: 19px; font-size: 17.600px; line-height: 28px; white-space: nowrap; }
.notify { position: relative; margin-left: 29px; }
.badge.light { left: 11px; top: 11px; background: #d9d1dbee; }
```
